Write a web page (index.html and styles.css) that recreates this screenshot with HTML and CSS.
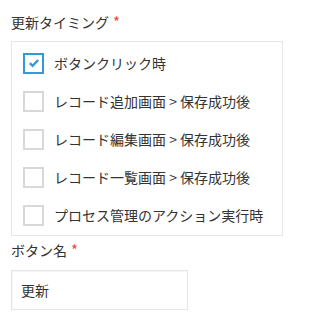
FILE: index.html
```
<!DOCTYPE html>
<html lang="ja">

<head>
  <meta charset="UTF-8">
  <title>設定</title>
  <link rel="stylesheet" href="styles.css">
</head>

<body class="bod">

  <div class="field">
    <div class="label">更新タイミング<span class="req">*</span></div>
    <div class="group">
      <label class="item">
        <span class="box checked">
          <svg width="12" height="10" viewBox="0 0 12 10"><path d="M1.8 5.2 L4.6 7.8 L10.2 2" fill="none" stroke="#3498db" stroke-width="2.4"/></svg>
        </span>
        ボタンクリック時
      </label>
      <label class="item"><span class="box"></span>レコード追加画面 &gt; 保存成功後</label>
      <label class="item"><span class="box"></span>レコード編集画面 &gt; 保存成功後</label>
      <label class="item"><span class="box"></span>レコード一覧画面 &gt; 保存成功後</label>
      <label class="item"><span class="box"></span>プロセス管理のアクション実行時</label>
    </div>
  </div>

  <div class="field">
    <div class="label small">ボタン名<span class="req">*</span></div>
    <input class="text" type="text" value="更新">
  </div>

</body>

</html>
```

FILE: styles.css
```
html {
  box-sizing: border-box;
}

*,
*:before,
*:after {
  box-sizing: inherit;
}

body {
  margin: 0;
  padding: 12px 11px 0;
  font-family: "Noto Sans CJK JP", "Noto Sans", sans-serif;
  font-size: 14px;
  color: #333;
  background: #fff;
}

.label {
  line-height: 20px;
  margin-bottom: 9px;
}

.label.small {
  margin-top: 4px;
  margin-bottom: 10px;
}

.req {
  color: #e74c3c;
  margin-left: 4px;
  font-size: 15px;
}

.group {
  width: 272px;
  border: 1px solid #e3e7e8;
  padding: 2px 11px 1px;
}

.item {
  display: flex;
  align-items: center;
  height: 38px;
  gap: 10px;
}

.box {
  width: 21px;
  height: 21px;
  border: 2px solid #d8d8d8;
  display: flex;
  align-items: center;
  justify-content: center;
  flex-shrink: 0;
}

.box.checked {
  border-color: #3498db;
}

.text {
  display: block;
  width: 177px;
  height: 40px;
  border: 1px solid #e3e7e8;
  box-shadow: 1px 1px 1px 0 #f5f5f5 inset;
  padding: 0 9px;
  font-family: inherit;
  font-size: 14px;
  color: #333;
  outline: none;
}
```
